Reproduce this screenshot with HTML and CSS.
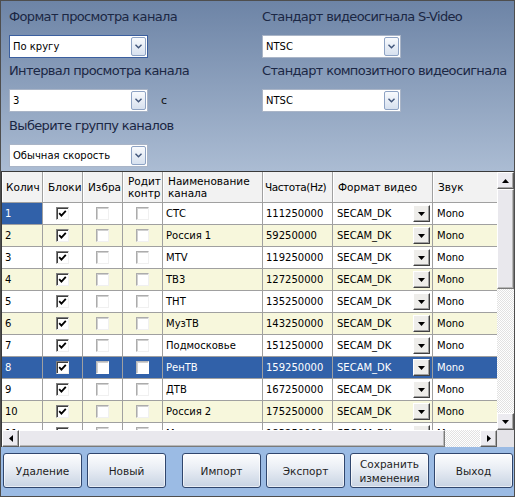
FILE: index.html
```html
<!DOCTYPE html>
<html lang="ru">
	<head>
		<meta charset="UTF-8" />
		<title>Каналы</title>
		<link rel="stylesheet" href="styles.css">
	</head>
	<body>
		<div class="window">
			<div class="settings">
				<div class="settings-col">
					<div class="field-label">Формат просмотра канала</div>
					<div class="combo-line">
						<div class="combo combo-focus">
							<span class="combo-text">По кругу</span>
							<span class="combo-btn"><svg width="7" height="5" viewBox="0 0 7 5"><polyline points="0.5,0.8 3.5,3.8 6.5,0.8" fill="none" stroke="#3f5479" stroke-width="1.4"/></svg></span>
						</div>
					</div>
					<div class="field-label">Интервал просмотра канала</div>
					<div class="combo-line combo-line-mid">
						<div class="combo">
							<span class="combo-text">3</span>
							<span class="combo-btn"><svg width="7" height="5" viewBox="0 0 7 5"><polyline points="0.5,0.8 3.5,3.8 6.5,0.8" fill="none" stroke="#3f5479" stroke-width="1.4"/></svg></span>
						</div>
						<span class="combo-unit">с</span>
					</div>
					<div class="field-label">Выберите группу каналов</div>
					<div class="combo-line">
						<div class="combo">
							<span class="combo-text">Обычная скорость</span>
							<span class="combo-btn"><svg width="7" height="5" viewBox="0 0 7 5"><polyline points="0.5,0.8 3.5,3.8 6.5,0.8" fill="none" stroke="#3f5479" stroke-width="1.4"/></svg></span>
						</div>
					</div>
				</div>
				<div class="settings-col settings-col-right">
					<div class="field-label">Стандарт видеосигнала S-Video</div>
					<div class="combo-line">
						<div class="combo">
							<span class="combo-text">NTSC</span>
							<span class="combo-btn"><svg width="7" height="5" viewBox="0 0 7 5"><polyline points="0.5,0.8 3.5,3.8 6.5,0.8" fill="none" stroke="#3f5479" stroke-width="1.4"/></svg></span>
						</div>
					</div>
					<div class="field-label">Стандарт композитного видеосигнала</div>
					<div class="combo-line combo-line-mid">
						<div class="combo">
							<span class="combo-text">NTSC</span>
							<span class="combo-btn"><svg width="7" height="5" viewBox="0 0 7 5"><polyline points="0.5,0.8 3.5,3.8 6.5,0.8" fill="none" stroke="#3f5479" stroke-width="1.4"/></svg></span>
						</div>
					</div>
				</div>
			</div>

			<div class="grid">
				<div class="grid-view">
					<div class="grid-head">
						<div class="head-cell c-num">Колич</div>
						<div class="head-cell c-lock">Блоки</div>
						<div class="head-cell c-fav">Избра</div>
						<div class="head-cell c-par">Родит<br />контр</div>
						<div class="head-cell c-name">Наименование<br />канала</div>
						<div class="head-cell c-freq">Частота(Hz)</div>
						<div class="head-cell c-fmt">Формат видео</div>
						<div class="head-cell c-snd">Звук</div>
					</div>

					<div class="grid-row">
						<div class="cell c-num cell-current">1</div>
						<div class="cell c-lock cell-check"><span class="chk chk-on"><svg width="9" height="9" viewBox="0 0 9 9"><path d="M1.2 4.2 L3.4 6.6 L7.8 1.8" fill="none" stroke="#000" stroke-width="1.8"/></svg></span></div>
						<div class="cell c-fav cell-check"><span class="chk"></span></div>
						<div class="cell c-par cell-check"><span class="chk"></span></div>
						<div class="cell c-name">СТС</div>
						<div class="cell c-freq">111250000</div>
						<div class="cell c-fmt"><span>SECAM_DK</span><span class="fmt-btn"><svg width="7" height="4" viewBox="0 0 7 4"><polygon points="0,0 7,0 3.5,4" fill="#000"/></svg></span></div>
						<div class="cell c-snd">Mono</div>
					</div>
					<div class="grid-row row-alt">
						<div class="cell c-num">2</div>
						<div class="cell c-lock cell-check"><span class="chk chk-on"><svg width="9" height="9" viewBox="0 0 9 9"><path d="M1.2 4.2 L3.4 6.6 L7.8 1.8" fill="none" stroke="#000" stroke-width="1.8"/></svg></span></div>
						<div class="cell c-fav cell-check"><span class="chk"></span></div>
						<div class="cell c-par cell-check"><span class="chk"></span></div>
						<div class="cell c-name">Россия 1</div>
						<div class="cell c-freq">59250000</div>
						<div class="cell c-fmt"><span>SECAM_DK</span><span class="fmt-btn"><svg width="7" height="4" viewBox="0 0 7 4"><polygon points="0,0 7,0 3.5,4" fill="#000"/></svg></span></div>
						<div class="cell c-snd">Mono</div>
					</div>
					<div class="grid-row">
						<div class="cell c-num">3</div>
						<div class="cell c-lock cell-check"><span class="chk chk-on"><svg width="9" height="9" viewBox="0 0 9 9"><path d="M1.2 4.2 L3.4 6.6 L7.8 1.8" fill="none" stroke="#000" stroke-width="1.8"/></svg></span></div>
						<div class="cell c-fav cell-check"><span class="chk"></span></div>
						<div class="cell c-par cell-check"><span class="chk"></span></div>
						<div class="cell c-name">MTV</div>
						<div class="cell c-freq">119250000</div>
						<div class="cell c-fmt"><span>SECAM_DK</span><span class="fmt-btn"><svg width="7" height="4" viewBox="0 0 7 4"><polygon points="0,0 7,0 3.5,4" fill="#000"/></svg></span></div>
						<div class="cell c-snd">Mono</div>
					</div>
					<div class="grid-row row-alt">
						<div class="cell c-num">4</div>
						<div class="cell c-lock cell-check"><span class="chk chk-on"><svg width="9" height="9" viewBox="0 0 9 9"><path d="M1.2 4.2 L3.4 6.6 L7.8 1.8" fill="none" stroke="#000" stroke-width="1.8"/></svg></span></div>
						<div class="cell c-fav cell-check"><span class="chk"></span></div>
						<div class="cell c-par cell-check"><span class="chk"></span></div>
						<div class="cell c-name">ТВ3</div>
						<div class="cell c-freq">127250000</div>
						<div class="cell c-fmt"><span>SECAM_DK</span><span class="fmt-btn"><svg width="7" height="4" viewBox="0 0 7 4"><polygon points="0,0 7,0 3.5,4" fill="#000"/></svg></span></div>
						<div class="cell c-snd">Mono</div>
					</div>
					<div class="grid-row">
						<div class="cell c-num">5</div>
						<div class="cell c-lock cell-check"><span class="chk chk-on"><svg width="9" height="9" viewBox="0 0 9 9"><path d="M1.2 4.2 L3.4 6.6 L7.8 1.8" fill="none" stroke="#000" stroke-width="1.8"/></svg></span></div>
						<div class="cell c-fav cell-check"><span class="chk"></span></div>
						<div class="cell c-par cell-check"><span class="chk"></span></div>
						<div class="cell c-name">ТНТ</div>
						<div class="cell c-freq">135250000</div>
						<div class="cell c-fmt"><span>SECAM_DK</span><span class="fmt-btn"><svg width="7" height="4" viewBox="0 0 7 4"><polygon points="0,0 7,0 3.5,4" fill="#000"/></svg></span></div>
						<div class="cell c-snd">Mono</div>
					</div>
					<div class="grid-row row-alt">
						<div class="cell c-num">6</div>
						<div class="cell c-lock cell-check"><span class="chk chk-on"><svg width="9" height="9" viewBox="0 0 9 9"><path d="M1.2 4.2 L3.4 6.6 L7.8 1.8" fill="none" stroke="#000" stroke-width="1.8"/></svg></span></div>
						<div class="cell c-fav cell-check"><span class="chk"></span></div>
						<div class="cell c-par cell-check"><span class="chk"></span></div>
						<div class="cell c-name">МузТВ</div>
						<div class="cell c-freq">143250000</div>
						<div class="cell c-fmt"><span>SECAM_DK</span><span class="fmt-btn"><svg width="7" height="4" viewBox="0 0 7 4"><polygon points="0,0 7,0 3.5,4" fill="#000"/></svg></span></div>
						<div class="cell c-snd">Mono</div>
					</div>
					<div class="grid-row">
						<div class="cell c-num">7</div>
						<div class="cell c-lock cell-check"><span class="chk chk-on"><svg width="9" height="9" viewBox="0 0 9 9"><path d="M1.2 4.2 L3.4 6.6 L7.8 1.8" fill="none" stroke="#000" stroke-width="1.8"/></svg></span></div>
						<div class="cell c-fav cell-check"><span class="chk"></span></div>
						<div class="cell c-par cell-check"><span class="chk"></span></div>
						<div class="cell c-name">Подмосковье</div>
						<div class="cell c-freq">151250000</div>
						<div class="cell c-fmt"><span>SECAM_DK</span><span class="fmt-btn"><svg width="7" height="4" viewBox="0 0 7 4"><polygon points="0,0 7,0 3.5,4" fill="#000"/></svg></span></div>
						<div class="cell c-snd">Mono</div>
					</div>
					<div class="grid-row row-sel">
						<div class="cell c-num">8</div>
						<div class="cell c-lock cell-check"><span class="chk chk-on"><svg width="9" height="9" viewBox="0 0 9 9"><path d="M1.2 4.2 L3.4 6.6 L7.8 1.8" fill="none" stroke="#000" stroke-width="1.8"/></svg></span></div>
						<div class="cell c-fav cell-check"><span class="chk chk-sel"></span></div>
						<div class="cell c-par cell-check"><span class="chk chk-sel"></span></div>
						<div class="cell c-name">РенТВ</div>
						<div class="cell c-freq">159250000</div>
						<div class="cell c-fmt"><span>SECAM_DK</span><span class="fmt-btn"><svg width="7" height="4" viewBox="0 0 7 4"><polygon points="0,0 7,0 3.5,4" fill="#000"/></svg></span></div>
						<div class="cell c-snd">Mono</div>
					</div>
					<div class="grid-row">
						<div class="cell c-num">9</div>
						<div class="cell c-lock cell-check"><span class="chk chk-on"><svg width="9" height="9" viewBox="0 0 9 9"><path d="M1.2 4.2 L3.4 6.6 L7.8 1.8" fill="none" stroke="#000" stroke-width="1.8"/></svg></span></div>
						<div class="cell c-fav cell-check"><span class="chk"></span></div>
						<div class="cell c-par cell-check"><span class="chk"></span></div>
						<div class="cell c-name">ДТВ</div>
						<div class="cell c-freq">167250000</div>
						<div class="cell c-fmt"><span>SECAM_DK</span><span class="fmt-btn"><svg width="7" height="4" viewBox="0 0 7 4"><polygon points="0,0 7,0 3.5,4" fill="#000"/></svg></span></div>
						<div class="cell c-snd">Mono</div>
					</div>
					<div class="grid-row row-alt">
						<div class="cell c-num">10</div>
						<div class="cell c-lock cell-check"><span class="chk chk-on"><svg width="9" height="9" viewBox="0 0 9 9"><path d="M1.2 4.2 L3.4 6.6 L7.8 1.8" fill="none" stroke="#000" stroke-width="1.8"/></svg></span></div>
						<div class="cell c-fav cell-check"><span class="chk"></span></div>
						<div class="cell c-par cell-check"><span class="chk"></span></div>
						<div class="cell c-name">Россия 2</div>
						<div class="cell c-freq">175250000</div>
						<div class="cell c-fmt"><span>SECAM_DK</span><span class="fmt-btn"><svg width="7" height="4" viewBox="0 0 7 4"><polygon points="0,0 7,0 3.5,4" fill="#000"/></svg></span></div>
						<div class="cell c-snd">Mono</div>
					</div>
					<div class="grid-row">
						<div class="cell c-num">11</div>
						<div class="cell c-lock cell-check"><span class="chk chk-on"><svg width="9" height="9" viewBox="0 0 9 9"><path d="M1.2 4.2 L3.4 6.6 L7.8 1.8" fill="none" stroke="#000" stroke-width="1.8"/></svg></span></div>
						<div class="cell c-fav cell-check"><span class="chk"></span></div>
						<div class="cell c-par cell-check"><span class="chk"></span></div>
						<div class="cell c-name">Муз</div>
						<div class="cell c-freq">183250000</div>
						<div class="cell c-fmt"><span>SECAM_DK</span><span class="fmt-btn"><svg width="7" height="4" viewBox="0 0 7 4"><polygon points="0,0 7,0 3.5,4" fill="#000"/></svg></span></div>
						<div class="cell c-snd">Mono</div>
					</div>
				</div>

				<div class="vscroll">
					<div class="sb-btn"><svg width="7" height="4" viewBox="0 0 7 4"><polygon points="0,4 7,4 3.5,0" fill="#000"/></svg></div>
					<div class="sb-thumb vthumb"></div>
					<div class="sb-track"></div>
					<div class="sb-btn"><svg width="7" height="4" viewBox="0 0 7 4"><polygon points="0,0 7,0 3.5,4" fill="#000"/></svg></div>
				</div>
				<div class="hscroll">
					<div class="sb-btn"><svg width="4" height="7" viewBox="0 0 4 7"><polygon points="4,0 4,7 0,3.5" fill="#000"/></svg></div>
					<div class="sb-thumb hthumb"></div>
					<div class="sb-track"></div>
					<div class="sb-btn"><svg width="4" height="7" viewBox="0 0 4 7"><polygon points="0,0 0,7 4,3.5" fill="#000"/></svg></div>
				</div>
				<div class="corner"></div>
			</div>

			<div class="actions">
				<button class="action-btn">Удаление</button>
				<button class="action-btn">Новый</button>
				<button class="action-btn action-gap">Импорт</button>
				<button class="action-btn">Экспорт</button>
				<button class="action-btn">Сохранить<br />изменения</button>
				<button class="action-btn">Выход</button>
			</div>
		</div>
	</body>
</html>
```

FILE: styles.css
```css
* {
	padding: 0;
	margin: 0;
	box-sizing: border-box;
}
body {
	width: 515px;
	height: 497px;
	font-family: "DejaVu Sans", Verdana, sans-serif;
	color: #000;
}
.window {
	width: 515px;
	height: 497px;
	border: 1px solid #4e4e4e;
	display: flex;
	flex-direction: column;
	background: #9bbbe4;
}

/* top settings */
.settings {
	height: 170px;
	flex: none;
	display: flex;
	padding: 5px 0 0 8px;
	background: linear-gradient(#6d84a6, #abbcd3);
}
.settings-col {
	width: 253px;
}
.settings-col-right {
	width: auto;
}
.field-label {
	height: 22px;
	line-height: 22px;
	margin-bottom: 7px;
	font-size: 13px;
	letter-spacing: -0.65px;
	color: #1b2744;
	white-space: nowrap;
}
.combo-line {
	display: flex;
	align-items: center;
	margin-bottom: 2px;
}
.combo-line-mid {
	margin-bottom: 3px;
}
.combo {
	width: 139px;
	height: 23px;
	display: flex;
	align-items: center;
	justify-content: space-between;
	padding: 1px;
	background: #fff;
	border: 1px solid #aab5c7;
}
.combo-focus {
	border-color: #3b5f9f;
}
.combo-text {
	padding-left: 2px;
	font-size: 10px;
	color: #000;
}
.combo-btn {
	width: 15px;
	height: 19px;
	display: flex;
	align-items: center;
	justify-content: center;
	border: 1px solid #8ea3c4;
	border-radius: 2px;
	background: linear-gradient(#f8fafd, #d7e1ef);
}
.combo-unit {
	margin-left: 13px;
	font-size: 11px;
	color: #111;
}

/* channel grid */
.grid {
	height: 276px;
	flex: none;
	display: grid;
	grid-template-columns: 495px 17px;
	grid-template-rows: 258px 17px;
	border-top: 1px solid #3a3a3a;
	border-left: 1px solid #3a3a3a;
	background: #fff;
}
.grid-view {
	overflow: hidden;
}
.grid-head {
	display: flex;
	height: 31px;
	font-size: 10.5px;
	background: #f2f2f2;
	border-bottom: 1px solid #a0a0a0;
}
.head-cell {
	flex: none;
	display: flex;
	align-items: center;
	padding-left: 5px;
	line-height: 12px;
	white-space: nowrap;
	overflow: hidden;
	border-right: 1px solid #a0a0a0;
	box-shadow: inset 1px 0 #fff;
}
.grid-row {
	display: flex;
	height: 22px;
	line-height: 21px;
	font-size: 10px;
	background: #fff;
	border-bottom: 1px solid #a0a0a0;
}
.row-alt {
	background: #f7f7dc;
}
.row-sel {
	background: #3161a9;
	color: #fff;
}
.cell {
	flex: none;
	padding-left: 3px;
	white-space: nowrap;
	overflow: hidden;
	border-right: 1px solid #a0a0a0;
}
.cell-current {
	background: #3161a9;
	color: #fff;
}
.cell-check {
	display: flex;
	align-items: center;
	justify-content: center;
	padding: 0;
}
.c-num { width: 41px; }
.c-lock { width: 40px; }
.c-fav { width: 40px; }
.c-par { width: 40px; }
.c-name { width: 100px; }
.c-freq { width: 70px; }
.c-fmt { width: 100px; }
.c-snd { width: 80px; }
.head-cell.c-num {
	padding-left: 4px;
}
.head-cell.c-freq {
	padding-left: 2px;
	letter-spacing: -0.45px;
}
.cell.c-fmt {
	display: flex;
	align-items: center;
	justify-content: space-between;
	padding-left: 4px;
	padding-right: 2px;
}
.cell.c-snd {
	padding-left: 4px;
}
.chk {
	width: 13px;
	height: 13px;
	display: flex;
	align-items: center;
	justify-content: center;
	background: #fff;
	border: 1px solid;
	border-color: #acacac #f0f0f0 #f0f0f0 #acacac;
	box-shadow: inset 1px 1px #d0d0d0;
}
.chk-on {
	border-color: #808080 #f0f0f0 #f0f0f0 #808080;
	box-shadow: inset 1px 1px #404040;
}
.chk-sel {
	border-color: #b8b8b8 #fff #fff #b8b8b8;
}
.fmt-btn {
	width: 17px;
	height: 17px;
	flex: none;
	display: flex;
	align-items: center;
	justify-content: center;
	background: #eeedea;
	border: 1px solid;
	border-color: #fff #404040 #404040 #fff;
	box-shadow: inset -1px -1px #a0a0a0;
}

/* scrollbars */
.vscroll,
.hscroll {
	display: flex;
	background-color: #fff;
	background-image: repeating-conic-gradient(#e2e2e2 0 25%, #fff 0 50%);
	background-size: 2px 2px;
}
.vscroll {
	flex-direction: column;
}
.sb-btn {
	width: 17px;
	height: 17px;
	flex: none;
	display: flex;
	align-items: center;
	justify-content: center;
	background: #ecebf0;
	border: 1px solid;
	border-color: #fff #5c5c5c #5c5c5c #fff;
	box-shadow: inset -1px -1px #a8a8a8;
}
.sb-thumb {
	flex: none;
	background: #e9e8ed;
	border: 1px solid;
	border-color: #fff #7a7a7a #7a7a7a #fff;
	box-shadow: inset -1px -1px #b8b8b8;
}
.vthumb {
	height: 100px;
}
.hthumb {
	width: 426px;
}
.sb-track {
	flex: 1;
}
.corner {
	background: #e4e3e8;
}

/* bottom buttons */
.actions {
	flex: 1;
	display: flex;
	column-gap: 5px;
	padding: 6px 0 0 2px;
	background: #9bbbe4;
}
.action-btn {
	width: 79px;
	height: 35px;
	font-family: "DejaVu Sans", Verdana, sans-serif;
	font-size: 10.5px;
	line-height: 14px;
	color: #1e1e1e;
	border: 1px solid #30466d;
	border-radius: 3px;
	background: linear-gradient(#fdfdfe 0%, #e8edf4 45%, #c8d3e3 100%);
	box-shadow: inset 0 0 0 1px rgba(255, 255, 255, 0.6);
}
.action-gap {
	margin-left: 11px;
}
```
